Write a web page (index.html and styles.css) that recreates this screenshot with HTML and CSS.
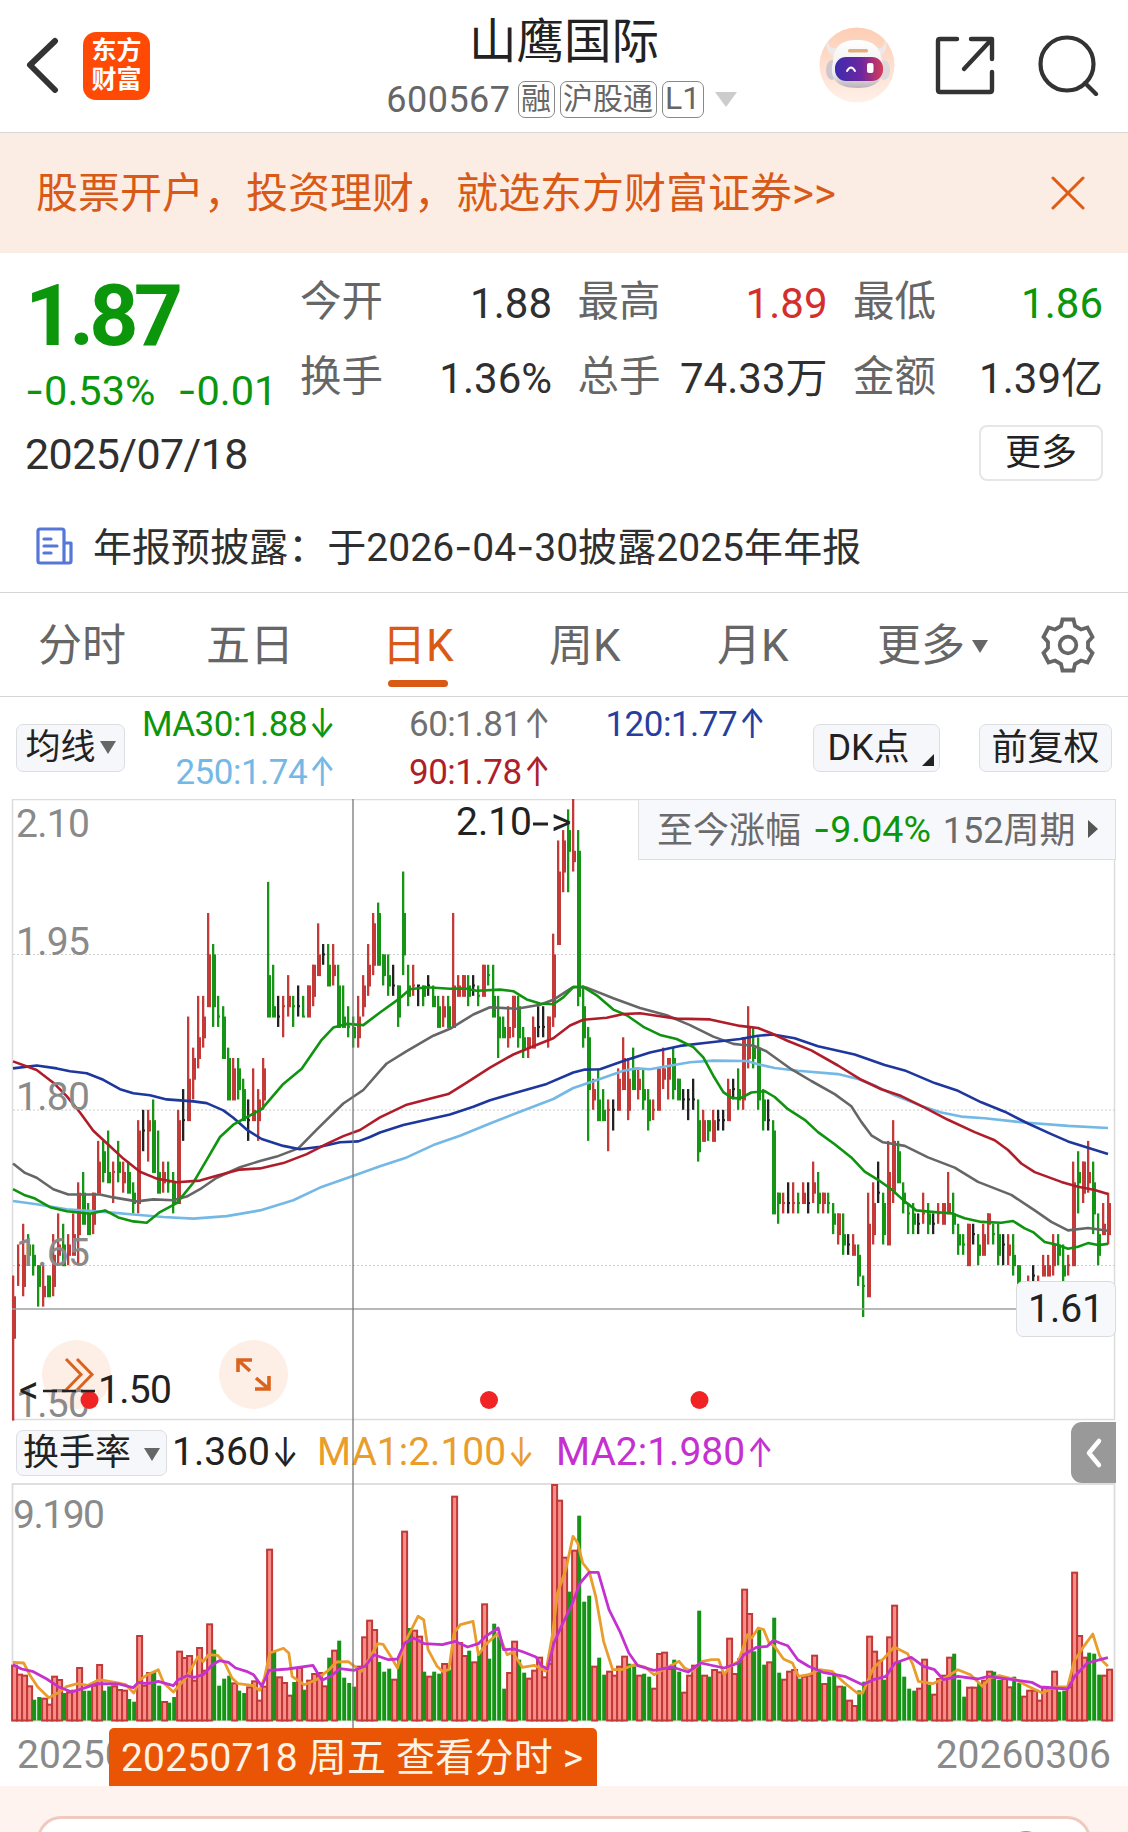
FILE: index.html
```html
<!DOCTYPE html>
<html lang="zh-CN">
<head>
    <meta charset="UTF-8">
    <meta name="viewport" content="width=device-width, initial-scale=1.0">
    <title>山鹰国际 600567</title>
    <link rel="stylesheet" href="styles.css">
</head>
<body>

<!-- 顶部导航 -->
<header class="header">
    <div class="header-left">
        <svg class="back" width="34" height="56" viewBox="0 0 34 56"><path d="M30 4 L5 28 L30 53" fill="none" stroke="#333" stroke-width="6" stroke-linecap="round" stroke-linejoin="round"/></svg>
        <div class="logo"><span>东方</span><span>财富</span></div>
    </div>
    <div class="header-title">
        <h1>山鹰国际</h1>
        <div class="code-row">
            <span class="code">600567</span>
            <span class="tag">融</span>
            <span class="tag">沪股通</span>
            <span class="tag tag-l1">L1</span>
            <i class="tri tri-light"></i>
        </div>
    </div>
    <div class="header-right">
        <svg width="76" height="76" viewBox="0 0 76 76">
            <defs>
                <linearGradient id="halo" x1="0" y1="0" x2="0" y2="1"><stop offset="0" stop-color="#fdcdb4"/><stop offset="1" stop-color="#fff0e8"/></linearGradient>
                <linearGradient id="visor"><stop offset="0" stop-color="#3c2cae"/><stop offset=".55" stop-color="#6d27a0"/><stop offset="1" stop-color="#d83a58"/></linearGradient>
                <linearGradient id="head" x1="0" y1="0" x2="0" y2="1"><stop offset="0" stop-color="#fff"/><stop offset=".7" stop-color="#eeebee"/><stop offset="1" stop-color="#b9b1b8"/></linearGradient>
            </defs>
            <circle cx="38" cy="38" r="37.5" fill="url(#halo)"/>
            <path d="M10 12 C8 18 11 22 17 21 L15 29 C8 27 5 18 10 12Z M65 12 C67 18 64 22 58 21 L60 29 C67 27 70 18 65 12Z" fill="#eee8ea"/>
            <ellipse cx="13" cy="43" rx="6" ry="10" fill="#cfc7ce"/><ellipse cx="65" cy="43" rx="6" ry="10" fill="#ded7db"/>
            <path d="M14 34 C15 18 24 13 38 13 C52 13 61 18 63 34 C67 50 60 61 39 61 C16 61 10 50 14 34Z" fill="url(#head)"/>
            <rect x="29" y="22" width="20" height="3.5" rx="1.5" fill="#e3ae7e"/>
            <rect x="16" y="30" width="48" height="24" rx="11" fill="url(#visor)"/>
            <path d="M28 44 Q32 37 36 44" fill="none" stroke="#fff" stroke-width="2" stroke-linecap="round"/>
            <rect x="48" y="36" width="6.5" height="10" rx="2" fill="#fff"/>
        </svg>
        <svg class="share" width="60" height="60" viewBox="0 0 60 60" fill="none" stroke="#333" stroke-width="4.4" stroke-linecap="round" stroke-linejoin="round"><path d="M22 4 H5 Q3 4 3 6 V55 Q3 57 5 57 H55 Q57 57 57 55 V37 M36 4 H57 V24 M56 5 L29 34"/></svg>
        <svg width="62" height="62" viewBox="0 0 62 62" fill="none" stroke="#333" stroke-width="4.2" stroke-linecap="round"><circle cx="30" cy="30" r="26.5"/><path d="M48 49 L59 60"/></svg>
    </div>
</header>

<!-- 广告条 -->
<div class="banner">
    <span>股票开户，投资理财，就选东方财富证券&gt;&gt;</span>
    <svg width="34" height="34" viewBox="0 0 34 34" stroke="#df5c15" stroke-width="3" stroke-linecap="round"><path d="M2 2 L32 32 M32 2 L2 32"/></svg>
</div>

<!-- 行情 -->
<section class="quote">
    <div class="quote-price">
        <div class="price green">1.87</div>
        <div class="change green"><span><b class="dash">-</b>0.53%</span><span><b class="dash">-</b>0.01</span></div>
        <div class="date">2025/07/18</div>
    </div>
    <div class="quote-stats">
        <div class="stat"><label>今开</label><span>1.88</span></div>
        <div class="stat"><label>最高</label><span class="red">1.89</span></div>
        <div class="stat"><label>最低</label><span class="green">1.86</span></div>
        <div class="stat"><label>换手</label><span>1.36%</span></div>
        <div class="stat"><label>总手</label><span>74.33万</span></div>
        <div class="stat"><label>金额</label><span>1.39亿</span></div>
        <button class="more">更多</button>
    </div>
</section>
<div class="notice">
    <svg width="38" height="38" viewBox="0 0 38 38" fill="none" stroke="#5577d8" stroke-width="3.2" stroke-linejoin="round" stroke-linecap="round"><path d="M28 36 H4 Q2 36 2 34 V4 Q2 2 4 2 H26 Q28 2 28 4 V36 H33 Q35 36 35 34 V16 H28 M8 12 H15 M8 19 H21 M8 26 H15"/></svg>
    <span>年报预披露：于2026<b class="dash">-</b>04<b class="dash">-</b>30披露2025年年报</span>
</div>

<!-- 周期切换 -->
<nav class="tabs">
    <a class="tab">分时</a>
    <a class="tab">五日</a>
    <a class="tab active">日K</a>
    <a class="tab">周K</a>
    <a class="tab">月K</a>
    <a class="tab">更多<i class="tri tri-dark"></i></a>
    <svg class="gear" width="54" height="56" viewBox="0 0 54 56" fill="none" stroke="#666" stroke-width="3.8"><path d="M21.500 2.500 H32.500 L34 9 L40 12.500 L46.500 10.500 L51.500 20 L47 25 V31 L51.500 36 L46.500 45.500 L40 43.500 L34 47 L32.500 53.500 H21.500 L20 47 L14 43.500 L7.500 45.500 L2.500 36 L7 31 V25 L2.500 20 L7.500 10.500 L14 12.500 L20 9 Z"/><circle cx="27" cy="28" r="8.300"/></svg>
</nav>

<!-- 均线 -->
<div class="legend">
    <button class="chip chip-ma">均线<i class="tri tri-dark"></i></button>
    <div class="ma-list">
        <span class="green">MA30:1.88<b class="arr">↓</b></span>
        <span class="gray">60:1.81<b class="arr">↑</b></span>
        <span class="navy">120:1.77<b class="arr">↑</b></span>
        <span class="sky">250:1.74<b class="arr">↑</b></span>
        <span class="crimson">90:1.78<b class="arr">↑</b></span>
    </div>
    <button class="chip chip-dk">DK点<i class="corner"></i></button>
    <button class="chip chip-fq">前复权</button>
</div>

<div class="charts">
    <!-- K线图 -->
    <div class="kline">
        <svg id="kline" width="1128" height="622"></svg>
        <div class="range-tip"><span>至今涨幅</span><span class="green pct"><b class="dash">-</b>9.04%</span><span>152周期</span><i class="tri-right"></i></div>
        <div class="price-tip">1.61</div>
    </div>

    <!-- 换手率 -->
    <div class="vol-head">
        <button class="chip chip-vol">换手率<i class="tri tri-dark"></i></button>
        <span class="vol-now">1.360<b class="arr">↓</b></span>
        <span class="orange vol-ma1">MA1:2.100<b class="arr">↓</b></span>
        <span class="purple">MA2:1.980<b class="arr">↑</b></span>
        <div class="fold"><svg width="18" height="32" viewBox="0 0 18 32"><path d="M14 4 L4 16 L14 28" fill="none" stroke="#fff" stroke-width="4.5" stroke-linecap="round" stroke-linejoin="round"/></svg></div>
    </div>
    <svg id="vol" width="1128" height="240"></svg>
    <div class="cross-v"></div>
    <div class="dates">
        <span>20250</span>
        <span>20260306</span>
        <div class="date-tip">20250718 周五 查看分时 &gt;</div>
    </div>
</div>

<footer class="footer"><div class="footer-card"><i class="coin"></i></div></footer>

<script src="chart.js"></script>
</body>
</html>
```
FILE: styles.css
```css
* {
    box-sizing: border-box;
}
body {
    margin: 0;
    width: 1128px;
    height: 1832px;
    overflow: hidden;
    background: #fff;
    color: #2f2f2f;
    font-family: Roboto, "Noto Sans CJK SC", sans-serif;
}
button {
    font-family: inherit;
    color: #222;
    padding: 0;
    margin: 0;
}
i {
    display: inline-block;
}
.green { color: #0c960c; }
.red { color: #d32f2f; }
.gray { color: #707070; }
.navy { color: #243f9e; }
.sky { color: #74b8e6; }
.crimson { color: #ad1f2b; }
.orange { color: #e99d2c; }
.purple { color: #c531d0; }
/* 加宽的减号和箭头 */
.dash {
    font-family: Inter, sans-serif;
    font-weight: 400;
}
.arr {
    display: inline-block;
    font-family: Inter, sans-serif;
    font-weight: 400;
    transform: scale(0.95, 1.2);
}
.tri {
    border-left: 8px solid transparent;
    border-right: 8px solid transparent;
    border-top: 13px solid #666;
}
.tri-light {
    border-left-width: 11px;
    border-right-width: 11px;
    border-top: 15px solid #ccc;
    margin-left: 6px;
}

/* 顶部导航 */
.header {
    height: 133px;
    border-bottom: 1px solid #d8d8d8;
    display: flex;
    justify-content: space-between;
}
.header-left {
    display: flex;
    width: 300px;
    padding: 32px 0 0 25px;
}
.back {
    margin: 5px 24px 0 0;
}
.logo {
    width: 67px;
    height: 68px;
    border-radius: 13px;
    background: #ff4a05;
    color: #fff;
    font-size: 25px;
    font-weight: 700;
    line-height: 29px;
    padding-top: 4px;
    display: flex;
    flex-direction: column;
    align-items: center;
}
.header-title {
    width: 400px;
    display: flex;
    flex-direction: column;
    align-items: center;
}
h1 {
    margin: 14px 0 0 10px;
    font-size: 47.5px;
    line-height: 56px;
    font-weight: 400;
    color: #222;
}
.code-row {
    display: flex;
    align-items: center;
    gap: 5px;
    margin: 11px 0 0 5px;
    height: 37px;
    color: #666;
    white-space: nowrap;
}
.code {
    font-size: 36px;
    letter-spacing: 0.5px;
    margin-right: 2px;
}
.tag {
    height: 37px;
    border: 1.5px solid #888;
    border-radius: 7px;
    font-size: 30px;
    line-height: 33px;
    padding: 0 2.5px;
}
.tag-l1 {
    font-size: 32px;
}
.header-right {
    width: 310px;
    padding: 27px 0 0 1px;
    display: flex;
    gap: 40px;
}
.header-right .share {
    margin: 8px 2px 0 0;
}
.header-right svg {
    flex: none;
}
.header-right svg:last-child {
    margin-top: 7px;
}

/* 广告条 */
.banner {
    height: 120px;
    background: #fcede4;
    color: #d95a16;
    font-size: 42px;
    line-height: 60px;
    padding: 0 43px 0 36px;
    display: flex;
    align-items: center;
    justify-content: space-between;
}
.banner span {
    padding-top: 2px;
}

/* 行情 */
.quote {
    height: 243px;
    display: flex;
}
.quote-price {
    width: 300px;
    padding-left: 25px;
    white-space: nowrap;
}
.price {
    margin-top: 17px;
    font-size: 86px;
    line-height: 92px;
    font-weight: 700;
    letter-spacing: -5px;
}
.change {
    display: flex;
    gap: 22px;
    font-size: 41.5px;
    line-height: 50px;
    margin-top: 3px;
}
.date {
    font-size: 43px;
    line-height: 50px;
    margin-top: 13px;
    letter-spacing: -0.6px;
}
.quote-stats {
    flex: 1;
    display: grid;
    grid-template-columns: 252px 250px 250px;
    column-gap: 25.5px;
    grid-template-rows: 75px 75px 55px;
    padding-top: 14px;
}
.stat {
    display: flex;
    justify-content: space-between;
    align-items: center;
    height: 75px;
    line-height: 75px;
    font-size: 42px;
    white-space: nowrap;
}
.stat label {
    font-size: 41.5px;
    color: #666;
    position: relative;
    top: -3px;
}
.stat span {
    position: relative;
    top: -1px;
}
.more {
    grid-column: 3;
    justify-self: end;
    margin-top: 8px;
    width: 124px;
    height: 56px;
    border: 2px solid #e6e6e6;
    border-radius: 8px;
    background: #fff;
    font-size: 36px;
    line-height: 44px;
}
.notice {
    height: 97px;
    border-bottom: 1px solid #d5d5d5;
    padding: 4px 0 0 36px;
    display: flex;
    align-items: center;
    gap: 19px;
    font-size: 39px;
    letter-spacing: 0.05px;
    white-space: pre;
}
.notice span {
    padding-bottom: 5px;
}

/* 周期切换 */
.tabs {
    height: 104px;
    border-bottom: 1px solid #d5d5d5;
    display: flex;
    align-items: center;
    padding-left: 38px;
    font-size: 44px;
    color: #666;
}
.tab {
    position: relative;
    width: 168px;
    padding-bottom: 5px;
    white-space: nowrap;
}
.tab:nth-child(2) { width: 176px; }
.tab:nth-child(3) { width: 167px; }
.tab:nth-child(5) { width: 160px; }
.tab:nth-child(6) { width: 164px; }
.tab .tri {
    margin: 0 0 8px 7px;
}
.tab.active {
    color: #d95a16;
}
.tab.active::after {
    content: "";
    position: absolute;
    left: 6px;
    bottom: -8px;
    width: 60px;
    height: 7px;
    border-radius: 4px;
    background: #d95a16;
}

/* 均线 */
.legend {
    height: 102px;
    display: flex;
    padding-left: 16px;
}
.chip {
    height: 48px;
    margin-top: 27px;
    flex: none;
    background: #f6f7fa;
    border: 1.5px solid #dcdee1;
    border-radius: 7px;
    font-size: 36px;
    line-height: 42px;
    white-space: nowrap;
    position: relative;
}
.chip-ma {
    width: 109px;
    font-size: 35px;
}
.chip-ma .tri {
    margin: 0 0 5px 4px;
}
.chip-dk {
    width: 127px;
    padding-right: 16px;
}
.corner {
    position: absolute;
    right: 5px;
    bottom: 5px;
    border-left: 12px solid transparent;
    border-bottom: 12px solid #222;
}
.chip-fq {
    width: 133px;
    margin-left: 39px;
}
.ma-list {
    width: 688px;
    padding-top: 3px;
    display: grid;
    grid-template-columns: 211px 214px 216px;
    grid-template-rows: 48px 48px;
    font-size: 35px;
    line-height: 48px;
    white-space: nowrap;
}
.ma-list span {
    justify-self: end;
    letter-spacing: -0.5px;
}
.ma-list span:nth-child(2), .ma-list span:nth-child(5) {
    justify-self: start;
    margin-left: 73px;
}
.ma-list .arr, .vol-head .arr {
    font-size: 34px;
    margin-left: 1px;
}

/* 图表 */
.charts {
    position: relative;
    height: 987px;
}
.charts svg {
    display: block;
}
.kline {
    position: relative;
    height: 621px;
}
.axis {
    font-size: 39px;
    fill: #8a8a8a;
}
.mark {
    font-size: 39px;
    fill: #222;
}
.range-tip {
    position: absolute;
    right: 12px;
    top: 0;
    width: 478px;
    height: 61px;
    background: #f7f8fb;
    border: 1.5px solid #dcdee2;
    display: flex;
    align-items: center;
    padding: 0 0 6px 18px;
    gap: 12px;
    font-size: 36px;
    color: #6b6b6b;
    white-space: nowrap;
}
.pct {
    font-size: 37.5px;
    padding-top: 3px;
}
.tri-right {
    margin-top: 4px;
    border-top: 9px solid transparent;
    border-bottom: 9px solid transparent;
    border-left: 10px solid #555;
}
.price-tip {
    position: absolute;
    right: 12px;
    top: 482px;
    width: 100px;
    height: 56px;
    background: #f7f8fb;
    border: 1.5px solid #d9dbde;
    border-radius: 7px;
    font-size: 39px;
    line-height: 54px;
    text-align: center;
    color: #222;
}
.vol-head {
    height: 63px;
    padding-left: 16px;
    display: flex;
    font-size: 39px;
    line-height: 64px;
    white-space: nowrap;
    position: relative;
}
.vol-head .chip {
    width: 151px;
    height: 46px;
    margin: 10px 5px 0 0;
    line-height: 40px;
}
.chip-vol .tri {
    margin: 0 0 4px 13px;
}
.vol-now {
    width: 145px;
    color: #222;
}
.vol-ma1 {
    width: 239px;
}
.fold {
    position: absolute;
    right: 12px;
    top: 2px;
    width: 45px;
    height: 61px;
    border-radius: 11px 0 0 11px;
    background: #999;
    display: flex;
    align-items: center;
    justify-content: center;
}
.cross-v {
    position: absolute;
    left: 352px;
    top: 0;
    width: 2px;
    height: 929px;
    background: rgba(120, 120, 120, 0.65);
}
.dates {
    position: relative;
    height: 63px;
    padding: 5px 17px 0 17px;
    display: flex;
    justify-content: space-between;
    font-size: 39px;
    line-height: 54px;
    color: #8a8a8a;
}
.date-tip {
    position: absolute;
    left: 109px;
    top: 5px;
    width: 488px;
    height: 58px;
    border-radius: 5px 5px 0 0;
    background: #e95504;
    color: #fff3e6;
    padding-left: 12px;
    line-height: 61px;
    letter-spacing: 0.2px;
    white-space: nowrap;
}
.footer {
    height: 46px;
    background: #fef3ee;
    padding: 30px 37px 0 37px;
}
.footer-card {
    height: 60px;
    border: 3px solid #f0c9bf;
    border-radius: 24px;
    background: #fff;
    position: relative;
}
.coin {
    position: absolute;
    right: 44px;
    top: 12px;
    width: 36px;
    height: 36px;
    border-radius: 50%;
    background: #d98a45;
}
```
FILE: chart.js
```js
// 每根K线: 最高 最低 实体上沿 实体下沿 颜色 (价格单位: 分)
var candles = `
164 150 162 158 r|167 163 165 165 r|169 162 166 163 r|168 165 167 166 g|167 164 166 165 g|165 161 165 163 g|165 161 163 162 r|164 162 164 162 g|168 162 166 163 r|170 165 167 166 r
169 165 167 165 g|168 165 167 166 r|170 166 168 166 r|173 165 172 168 r|174 169 172 169 g|171 168 170 168 g|172 168 172 169 r|177 172 175 172 r|177 173 176 174 g|178 173 174 173 g
175 171 174 174 r|177 173 175 174 g|175 172 174 173 r|175 172 174 172 g|173 170 172 171 g|179 170 178 171 r|180 176 178 178 b|180 175 179 178 r|181 174 179 174 g|178 172 174 172 g
175 172 174 173 r|175 172 173 173 g|174 170 173 171 g|180 171 179 171 r|182 177 179 179 b|189 179 183 179 r|186 181 185 183 r|191 184 187 185 r|191 186 189 187 r|199 190 195 190 r
196 188 195 190 g|191 188 189 189 g|190 185 189 185 g|186 181 185 181 g|185 181 184 181 r|185 181 184 182 g|183 179 182 179 g|181 177 179 179 b|184 179 180 179 r|182 177 181 179 r
185 180 184 181 r|202 189 193 189 g|194 189 190 189 g|191 188 189 189 b|191 187 190 190 r|193 189 191 190 r|191 188 190 190 g|192 189 190 190 b|191 189 189 189 g|192 189 192 189 r
194 190 194 191 r|198 193 195 193 r|196 194 195 195 b|196 192 194 192 g|196 192 194 193 r|194 188 192 188 g|192 188 189 188 g|190 187 188 188 g|189 186 188 187 g|191 186 189 187 r
193 189 192 190 r|196 191 194 192 r|199 193 198 194 r|200 194 199 194 g|195 192 195 193 g|195 191 193 192 g|194 191 192 192 b|192 188 192 189 g|203 193 199 195 g|194 190 192 191 g
194 191 192 192 r|192 190 192 192 b|192 190 192 191 g|193 191 192 192 b|192 190 191 190 g|191 188 190 188 g|191 188 190 189 r|191 188 190 188 g|199 188 192 188 r|193 191 192 191 r
193 191 193 191 r|193 190 192 191 g|193 191 192 192 b|192 190 191 191 g|194 191 194 191 r|194 192 193 193 g|194 189 191 189 g|191 185 189 187 g|189 187 188 187 g|190 186 188 187 r
191 187 191 188 r|191 186 190 187 g|188 185 187 186 g|187 185 187 186 r|189 186 188 186 r|190 187 188 188 b|190 187 188 188 b|189 186 189 187 r|197 188 195 189 r|206 196 203 196 r
207 201 206 203 r|209 201 207 205 g|210 203 205 204 r|207 190 205 191 g|192 186 190 187 g|188 177 187 182 g|183 180 182 181 r|184 179 181 179 g|182 179 180 179 g|181 176 180 180 r
181 178 180 180 b|184 180 183 180 r|187 182 185 182 r|185 179 183 180 r|186 182 184 182 g|184 181 183 182 r|184 180 182 181 g|182 178 181 179 g|181 179 180 180 r|184 180 184 180 r
186 182 184 183 r|185 181 185 183 r|186 181 185 182 g|183 181 183 181 g|182 180 181 181 b|182 179 181 181 b|183 180 181 181 b|181 175 179 176 g|180 177 179 177 r|179 177 179 178 g
180 177 179 177 r|180 178 179 179 b|180 178 179 179 b|183 179 182 179 r|183 181 182 182 b|184 180 182 181 g|187 180 187 181 r|190 184 188 185 r|188 184 186 185 g|187 180 186 181 g
182 178 181 179 g|181 178 179 179 b|179 170 178 170 g|172 169 172 171 g|172 170 171 171 r|173 170 171 171 b|173 170 171 171 r|172 170 171 171 g|173 171 172 171 r|173 170 171 171 b
175 171 173 172 r|174 170 172 171 g|172 170 172 171 r|172 170 171 171 g|171 168 170 169 g|170 167 170 168 r|170 166 168 167 g|168 166 167 167 b|168 166 167 166 r|167 163 166 164 g
164 160 163 163 g|172 162 169 162 r|173 167 171 168 r|175 171 172 172 b|172 167 171 168 g|177 167 174 167 r|179 171 177 172 r|177 173 176 173 g|173 170 172 171 g|171 168 170 170 g
171 168 170 169 g|170 168 169 169 b|172 169 170 170 r|171 168 170 169 g|170 168 169 169 b|171 169 170 170 r|171 169 171 169 r|174 170 171 170 r|172 168 170 169 g|169 166 168 167 g
168 166 167 167 g|169 165 169 165 r|169 167 168 168 b|168 165 167 166 g|169 166 168 166 r|170 167 170 169 r|169 167 168 168 g|169 165 168 166 g|168 165 167 167 b|168 165 167 166 r
168 164 166 165 g|165 162 165 163 g|163 162 163 162 g|164 162 163 163 r|165 163 164 164 b|164 163 163 163 r|166 164 165 164 r|166 164 165 164 r|168 164 167 165 r|168 165 167 166 g
167 163 165 164 g|166 164 165 165 r|175 165 173 165 r|176 170 174 173 g|175 171 175 172 r|177 172 174 173 r|175 168 173 170 g|170 165 168 166 g|171 168 169 168 r|172 167 171 168 r
`.trim().split(/[|\n]/).map(function (s) { return s.split(' '); });

// 换手率柱: 柱顶位置 + 颜色
var volumes = `735r 762r 765r 797r 840g 832g 834r 852r 768r 778r 820g 815r 810r 742r 813g 813g 795r 733r 813g 800g
797r 808r 810r 838g 846g 646r 795r 757r 757g 798g 844r 849g 832g 693r 712r 706r 780r 682r 750r 611r
690g 798g 777g 768g 788r 813g 820g 800r 782r 840r 798r 387r 695g 770r 787r 825r 787g 742r 810g 780r
760r 757r 797r 714g 690r 663g 774g 790g 801g 738r 650r 600r 628r 727g 756g 747g 777r 715g 333r 625g
630r 648r 756g 768r 756g 762g 730r 750g 228r 667r 706r 693g 725r 700g 551r 717g 612g 650g 807g 757r
663r 720g 759g 774r 750r 711r 770r 730r 193r 240r 411r 516g 390r 288g 546g 528g 738r 714g 765g 753r
765r 738r 708r 732g 740g 765r 762g 771g 804r 700r 696r 745r 720g 756g 816r 765r 735r 573g 765r 771g
748r 755r 760r 654r 760r 715g 507r 580r 695g 630g 735g 725r 594g 759g 777r 753r 748r 777g 768r 765r
705r 755g 790r 771g 765g 798r 800g 840r 856r 812g 786g 648r 693r 720r 780g 650r 555r 725g 771g 807g
813g 804r 717r 795g 822r 775r 765r 711r 702g 780g 831g 801r 801r 790g 780r 753r 756g 780g 775r 800r
771g 790g 828r 810r 810r 840r 800r 805r 753r 816g 813g 800r 456r 646r 711r 699g 702g 765g 765r 747r`.split(/\s+/);

var maLines = {
    '#74b8e6': '39,1007 110,1015 200,1027 320,1034 400,1040 490,1046 580,1050 680,1044 780,1030 880,1005 960,974 1050,948 1140,922 1220,900 1300,870 1380,847 1470,817 1560,788 1660,757 1720,730 1800,708 1870,688 1910,682 1950,684 2000,677 2070,667 2140,663 2240,664 2274,672 2324,681 2394,688 2514,696 2574,708 2624,724 2684,748 2764,774 2824,790 2884,800 2954,804 3064,814 3204,823 3324,828',
    '#666': '39,915 75,938 110,950 160,978 205,991 300,991 340,998 410,1008 460,1003 520,1005 560,996 600,978 650,950 720,924 780,909 830,898 895,878 950,832 1030,768 1090,735 1140,688 1160,670 1220,640 1300,602 1350,585 1420,550 1470,532 1550,536 1620,526 1660,514 1720,482 1760,484 1840,510 1920,534 2000,552 2070,576 2140,604 2200,622 2224,624 2259,626 2299,640 2374,684 2434,713 2504,745 2554,775 2584,813 2614,846 2649,863 2714,872 2784,900 2864,925 2934,960 3034,992 3104,1030 3154,1058 3204,1079 3264,1073 3324,1080',
    '#1d379c': '39,682 110,675 170,682 210,689 260,694 310,710 360,733 400,743 450,748 500,758 580,763 620,767 670,785 700,803 740,832 785,855 850,872 900,880 960,874 1020,863 1075,861 1110,850 1140,839 1210,821 1300,804 1350,795 1420,776 1470,760 1550,741 1640,720 1720,692 1755,685 1800,684 1870,664 1950,643 2040,627 2120,619 2220,610 2274,602 2319,599 2384,608 2454,628 2564,648 2654,674 2714,687 2804,718 2874,737 2944,765 3014,788 3084,817 3154,843 3204,861 3324,892',
    '#109410': '39,978 75,993 105,1001 150,1022 200,1032 270,1038 315,1030 355,1047 400,1057 440,1060 480,1034 530,1012 580,962 620,906 660,850 700,820 735,804 785,782 850,720 905,683 965,612 1000,582 1040,573 1090,576 1140,545 1195,513 1230,488 1280,483 1350,487 1395,486 1430,492 1500,489 1540,493 1580,513 1620,523 1660,525 1690,508 1720,483 1750,482 1790,503 1840,538 1880,552 1930,580 1980,600 2030,610 2080,630 2110,655 2140,700 2170,740 2195,754 2219,756 2254,741 2294,738 2324,752 2364,782 2414,808 2454,838 2504,868 2554,900 2594,935 2634,955 2674,978 2714,1008 2749,1030 2804,1034 2854,1037 2894,1049 2944,1058 3004,1060 3039,1056 3074,1074 3099,1083 3134,1107 3174,1115 3204,1124 3234,1119 3264,1110 3294,1115 3324,1112',
    '#b01d2a': '39,665 110,686 160,717 200,750 240,790 280,835 330,873 370,903 420,935 470,952 530,961 600,957 650,945 720,930 780,927 850,914 920,892 980,867 1030,848 1080,833 1140,802 1220,771 1280,758 1345,745 1400,717 1470,680 1540,648 1600,628 1660,608 1710,577 1750,563 1820,558 1870,549 1920,547 1970,553 2030,560 2130,562 2220,578 2274,583 2314,596 2364,615 2434,638 2514,675 2584,710 2644,733 2704,750 2774,778 2844,808 2924,838 2984,858 3024,882 3064,915 3104,936 3184,960 3234,972 3284,980 3324,990'
};

var volLines = {
    '#e99d2c': '36,728 66,730 85,770 105,802 136,834 165,817 185,801 215,792 245,797 275,780 320,788 350,795 372,820 390,780 410,765 440,750 455,790 482,817 500,795 520,770 550,712 565,726 580,705 605,707 625,730 645,775 662,792 700,797 722,812 735,775 750,700 788,686 803,700 812,770 845,795 880,780 915,750 935,727 968,726 1005,755 1025,720 1050,672 1065,674 1085,708 1105,745 1125,670 1162,590 1178,600 1190,690 1215,740 1230,755 1248,750 1262,640 1280,615 1315,605 1330,705 1350,675 1385,640 1410,705 1425,698 1452,743 1485,737 1518,755 1535,650 1550,520 1573,450 1593,350 1606,370 1620,430 1638,455 1656,530 1678,665 1703,750 1728,750 1763,735 1793,742 1818,765 1843,750 1888,725 1903,745 1923,755 1953,725 1978,720 1998,720 2013,765 2028,742 2053,725 2078,645 2090,655 2108,625 2123,630 2138,670 2153,680 2178,718 2203,730 2220,770 2248,765 2278,750 2313,755 2348,790 2383,820 2398,820 2428,745 2458,715 2486,682 2523,702 2538,735 2553,785 2593,792 2628,775 2663,750 2698,765 2731,800 2753,775 2778,768 2823,780 2858,800 2898,820 2933,802 2968,802 2986,725 3013,680 3038,643 3056,705 3063,722 3080,740',
    '#c431cf': '36,735 60,748 90,755 130,778 165,803 200,817 240,803 270,792 330,793 370,804 385,788 410,792 440,785 482,798 495,780 520,768 540,773 565,765 590,735 610,723 635,728 655,745 685,755 705,765 728,800 748,752 800,748 870,737 895,782 920,770 945,747 985,752 1015,740 1040,705 1080,720 1105,718 1125,670 1150,655 1180,672 1230,675 1265,665 1300,682 1330,672 1350,650 1385,625 1400,690 1430,688 1455,697 1490,712 1505,738 1522,748 1540,670 1565,610 1588,560 1613,490 1638,458 1663,458 1693,570 1723,635 1748,700 1773,738 1818,752 1868,742 1913,757 1948,730 2013,745 2053,730 2068,705 2103,683 2133,680 2150,662 2168,670 2190,678 2218,720 2248,740 2288,758 2348,770 2398,795 2428,780 2463,770 2488,730 2533,713 2568,740 2598,750 2623,780 2663,770 2718,778 2748,770 2868,788 2893,802 2968,808 2988,770 3023,730 3058,720 3080,714'
};

var colors = { r: '#c43a38', g: '#169416', b: '#222' };

function rect(x, y, w, h, extra) {
    return '<rect x="' + x + '" y="' + y + '" width="' + w + '" height="' + h + '" ' + extra + '/>';
}

// 折线
function lines(set, fx, fy, width) {
    return Object.keys(set).map(function (c) {
        var pts = set[c].split(' ').map(function (p) {
            p = p.split(',');
            return fx(+p[0]).toFixed(1) + ',' + fy(+p[1]).toFixed(1);
        });
        return '<polyline fill="none" stroke-linejoin="round" stroke="' + c + '" stroke-width="' + width + '" points="' + pts.join(' ') + '"/>';
    }).join('');
}

function drawKline() {
    var y = function (p) { return (210 - p) * 10.36; };
    var out = rect(12.5, 0.5, 1102, 620, 'fill="none" stroke="#dcdcdc" stroke-width="1.5"');
    [155.5, 311, 466.5].forEach(function (gy) {
        out += '<path d="M13 ' + gy + ' H1115" stroke="#ccc" stroke-dasharray="2 2"/>';
    });
    // 按钮底圆
    out += '<circle cx="76.500" cy="575.500" r="34.500" fill="#fdeee6"/><circle cx="253.500" cy="575.500" r="34.500" fill="#fdeee6"/>';
    out += '<g fill="none" stroke="#d9631f" stroke-width="3"><path d="M66 560 L81 575.500 L66 591 M77 560 L92 575.500 L77 591"/>'
        + '<path stroke-width="3.6" d="M238 573 V561 H252 M238 561 L250 572 M269 577 V590 H255 M269 590 L256 579"/></g>';
    candles.forEach(function (c, i) {
        var x = 13 + i * 5;
        var fill = 'fill="' + colors[c[4]] + '"';
        out += rect(x - 1, y(c[0]), 2.3, y(c[1]) - y(c[0]), fill);
        if (c[2] === c[3]) {
            out += rect(x - 1, y(c[2]) - 1, 3, 2, fill);
        } else {
            out += rect(x - 1, y(c[2]), 4, y(c[3]) - y(c[2]) + 1, fill);
        }
    });
    out += lines(maLines, function (v) { return v / 3; }, function (v) { return (v - 22) / 2.45; }, 2.6);
    // 坐标
    [['2.10', 38], ['1.95', 156], ['1.80', 311], ['1.65', 467], ['1.50', 618]].forEach(function (t) {
        out += '<text class="axis" x="16" y="' + t[1] + '" textLength="74">' + t[0] + '</text>';
    });
    out += '<path d="M12 510 H1016" stroke="#a0a0a0" stroke-width="1.6"/>';
    [89.5, 489, 699.5].forEach(function (cx) {
        out += '<circle cx="' + cx + '" cy="601" r="9" fill="#f02424"/>';
    });
    out += '<text class="mark" x="456" y="36">2.10</text><text class="mark" x="551" y="36">&gt;</text><path d="M533 25 H548" stroke="#222" stroke-width="3"/>';
    out += '<text class="mark" x="19" y="604">&lt;</text><path d="M43 592 H57 M62 592 H76 M81 592 H95" stroke="#222" stroke-width="2.500"/><text class="mark" x="98" y="604" textLength="74">1.50</text>';
    document.getElementById('kline').innerHTML = out;
}

function drawVolume() {
    var out = rect(12.5, 1, 1102, 236.5, 'fill="none" stroke="#dcdcdc" stroke-width="1.8"');
    out += '<text class="axis" x="13" y="45" textLength="92">9.190</text>';
    volumes.forEach(function (v, i) {
        var top = (parseInt(v) - 190) / 3;
        var x = 11.2 + i * 5;
        if (v.slice(-1) === 'r') {
            out += rect(x + 0.9, top + 1, 5, 236.5 - top, 'fill="#f98d88" stroke="#bf3a38" stroke-width="2"');
        } else {
            out += rect(x + 1, top, 4, 237.5 - top, 'fill="#169416"');
        }
    });
    out += lines(volLines, function (v) { return v / 2.78; }, function (v) { return (v - 190) / 3; }, 2.8);
    document.getElementById('vol').innerHTML = out;
}

drawKline();
drawVolume();
```
